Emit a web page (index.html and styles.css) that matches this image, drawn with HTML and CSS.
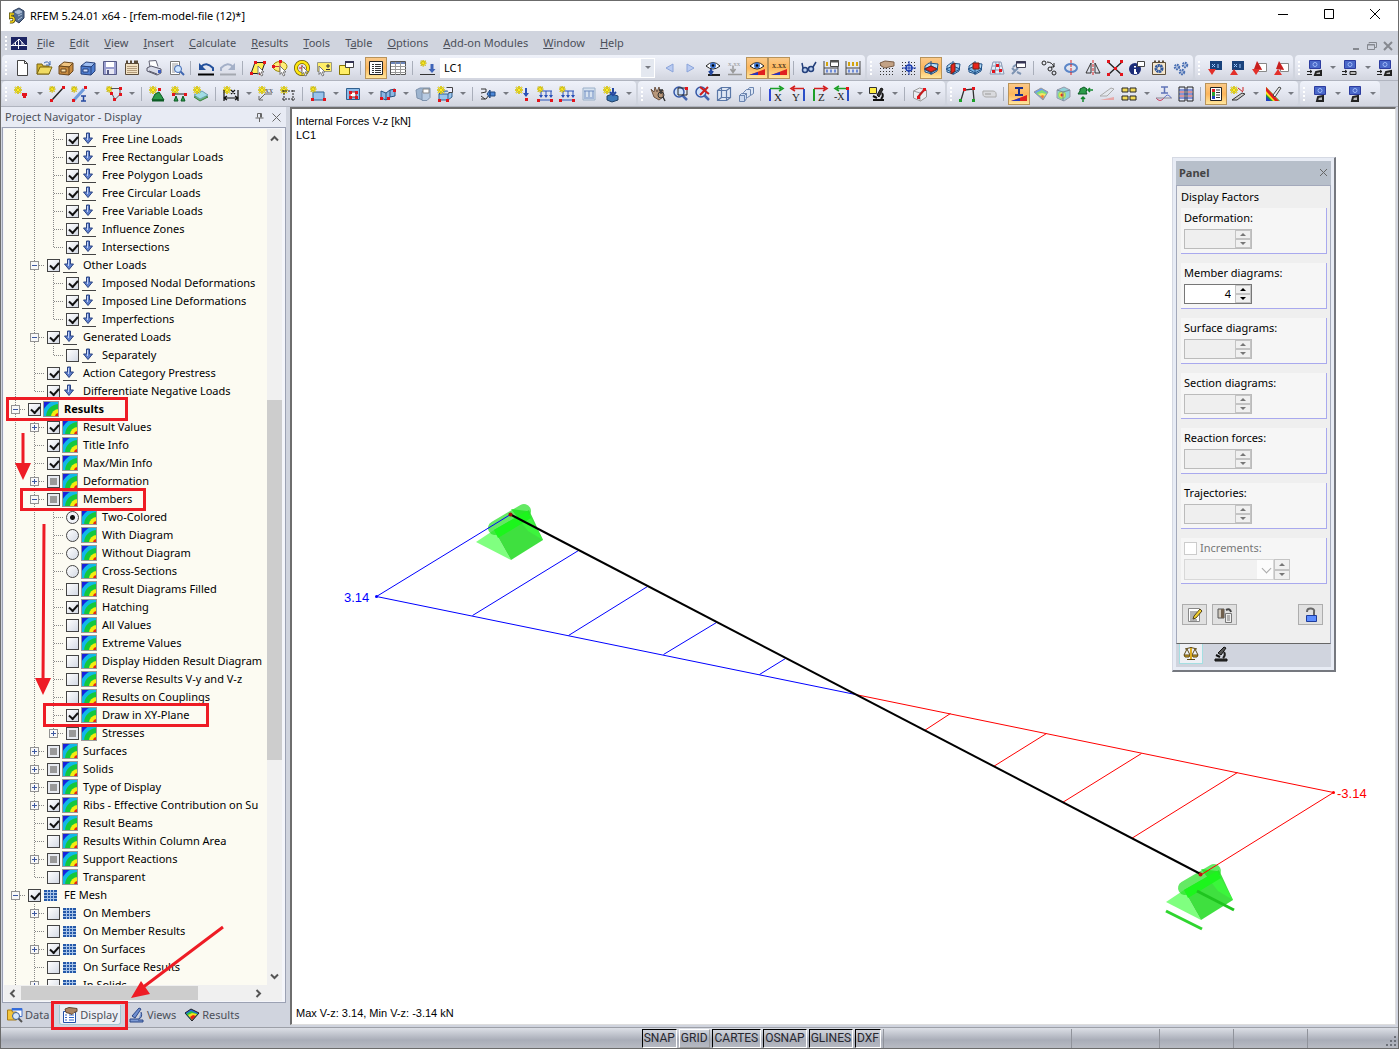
FILE: index.html
```html
<!DOCTYPE html>
<html lang="en">

<head>
    <meta charset="UTF-8">
    <meta name="viewport" content="width=device-width, initial-scale=1.0">
    <title>RFEM 5.24.01 x64 - [rfem-model-file (12)*]</title>
    <link rel="stylesheet" href="styles.css">
</head>

<body>
    <div class="window">
        <header class="titlebar">
            <svg class="app-icon" viewBox="0 0 18 18">
                <path d="M5 4l6-3 5 3v7l-5 5-6-4z" fill="#526b8e" stroke="#2d3d5c" />
                <path d="M7 5l4-2 3 2-4 2zM10 9l4-2M10 13l4-3" fill="#a9bcd6" stroke="#a9bcd6" />
                <path d="M6 7H2.500v3.500Q6 9.500 6 12.500T2 15" fill="none" stroke="#4f4b13" stroke-width="3" />
                <path d="M6 7H2.500v3.500Q6 9.500 6 12.500T2 15" fill="none" stroke="#f2d21b" stroke-width="1.600" />
            </svg>
            <h1>RFEM 5.24.01 x64 - [rfem-model-file (12)*]</h1>
            <div class="win-buttons">
                <button aria-label="Minimize"><svg viewBox="0 0 12 12"><path d="M1 6.500h10" /></svg></button>
                <button aria-label="Maximize"><svg viewBox="0 0 12 12"><path d="M1.500 1.500h9v9h-9z" /></svg></button>
                <button aria-label="Close"><svg viewBox="0 0 12 12"><path d="M1 1l10 10M11 1L1 11" /></svg></button>
            </div>
        </header>

        <nav class="menubar">
            <i class="grip"></i>
            <svg class="menu-logo" viewBox="0 0 16 13">
                <path d="M0 0h16v13H0z" fill="#1d2563" />
                <path d="M0 8.500h16M7.500 2v10M8 2L1 8.500M8 2l6 6.500M4.500 5v3M11 5v3" stroke="#fff" fill="none" />
            </svg>
            <a href="#"><u>F</u>ile</a>
            <a href="#"><u>E</u>dit</a>
            <a href="#"><u>V</u>iew</a>
            <a href="#"><u>I</u>nsert</a>
            <a href="#"><u>C</u>alculate</a>
            <a href="#"><u>R</u>esults</a>
            <a href="#"><u>T</u>ools</a>
            <a href="#">T<u>a</u>ble</a>
            <a href="#"><u>O</u>ptions</a>
            <a href="#"><u>A</u>dd-on Modules</a>
            <a href="#"><u>W</u>indow</a>
            <a href="#"><u>H</u>elp</a>
            <div class="mdi-buttons">
                <button aria-label="Minimize document"><svg viewBox="0 0 10 10"><path d="M2 8h6" stroke-width="2" /></svg></button>
                <button aria-label="Restore document"><svg viewBox="0 0 10 10"><path d="M.5 3.500h7v5h-7zM2 2.500V1.500h7.500v5H8M.5 4h7" /></svg></button>
                <button aria-label="Close document"><svg viewBox="0 0 10 10"><path d="M1 1l8 8M9 1L1 9" stroke-width="2" /></svg></button>
            </div>
        </nav>

        <div class="toolbar" id="toolbar1"></div>
        <div class="toolbar" id="toolbar2"></div>

        <main class="work">
            <aside class="navigator">
                <div class="nav-title">
                    <h2>Project Navigator - Display</h2>
                    <button aria-label="Pin"><svg viewBox="0 0 9 9"><path d="M2.500 .5h4v4M5.500 .5v4M2.500 .5v4M.5 5h8M4.500 5v4" /></svg></button>
                    <button aria-label="Close navigator"><svg viewBox="0 0 9 9"><path d="M.5 .5l8 8M8.500 .5l-8 8" /></svg></button>
                </div>
                <div class="nav-box">
                    <div class="tree-wrap">
                        <div class="tree" id="tree"></div>
                        <div class="vscroll">
                            <svg viewBox="0 0 9 9"><path d="M1 6.500L4.500 3 8 6.500" /></svg>
                            <div class="vtrack"><div class="vthumb"></div></div>
                            <svg viewBox="0 0 9 9"><path d="M1 2.500L4.500 6 8 2.500" /></svg>
                        </div>
                    </div>
                    <div class="hscroll">
                        <svg viewBox="0 0 9 9"><path d="M6.500 1L3 4.500 6.500 8" /></svg>
                        <div class="htrack"><div class="hthumb"></div></div>
                        <svg viewBox="0 0 9 9"><path d="M2.500 1L6 4.500 2.500 8" /></svg>
                    </div>
                </div>
                <div class="nav-tabs">
                    <button>
                        <svg viewBox="0 0 16 16"><path d="M5 1.500h10v8H5z" fill="#fff" stroke="#4470c8" /><path d="M5 2.500h10" stroke="#2e6ae0" stroke-width="2" /><path d="M.5 3h4l1 2h4v8h-9z" fill="#f4c63c" stroke="#a87c18" /><circle cx="9" cy="9" r="3.500" fill="#d7e8fa" stroke="#3b5c9a" /><path d="M11.500 11.500L15 15" stroke="#555" stroke-width="2" /></svg>Data
                    </button>
                    <button class="current">
                        <svg viewBox="0 0 16 16"><path d="M1.500 4.500h12v11h-12z" fill="#fff" stroke="#2351a8" /><path d="M3 8h2M7 8h5M3 10.500h2M7 10.500h5M3 13h2M7 13h5" stroke="#2f63c8" /><path d="M3 2l4-1.500 8 1v3l-3 1-2 2-2-1-4-1z" fill="#a98563" stroke="#5f4631" /></svg>Display
                    </button>
                    <button>
                        <svg viewBox="0 0 16 16"><path d="M10 1l2 1-6 9-3-2z" fill="#6e8fd0" stroke="#2a4687" /><path d="M12 5q2 5-2 7H1v3h13v-2H9" fill="#7d9ad4" stroke="#2a4687" /></svg>Views
                    </button>
                    <button>
                        <svg viewBox="0 0 16 16"><path d="M1 6l6-4 8 4-7 8z" fill="#1f62e8" /><path d="M2 7l5-3 7 3-6 6z" fill="#29c34a" /><path d="M4 8l4-2 5 1-5 6z" fill="#f4e11e" /><path d="M6 10l3-2 3 1-4 4z" fill="#e32219" /><path d="M1 6l6-4 8 4-7 8z" fill="none" stroke="#222" /></svg>Results
                    </button>
                </div>
            </aside>

            <section class="canvas">
                <svg class="drawing" viewBox="292 109 1103 915">
                    <!-- supports -->
                    <g id="support">
                        <path d="M494 530l-18 12 35 18z" fill="#80ff80" />
                        <path d="M494 530l35-20 14 30-32 20z" fill="#3fe03f" />
                        <path d="M527 511l16 29-15-9-17-22z" fill="#3cf53c" />
                        <path d="M495 528l29-17" stroke="#22e022" stroke-opacity=".7" stroke-width="14" stroke-linecap="round" />
                        <path d="M494 530l33-19 4 7-33 20z" fill="#1cf51c" />
                    </g>
                    <use href="#support" x="690" y="360" />
                    <path d="M1166 911l36 18" stroke="#2fd52f" stroke-width="3" />
                    <path d="M1197 891l37 19" stroke="#1fc41f" stroke-width="3" />
                    <!-- shear diagram -->
                    <g transform="translate(.5 .5)" fill="none">
                        <path d="M510 514L376 596L855 694M472 615L578 550M568 635L647 586M663 654L716 622M759 674L785 658" stroke="#0000ff" />
                        <path d="M855 694L1333 792L1201 874M950 713L924 730M1046 733L993 766M1141 753L1062 802M1237 772L1131 838" stroke="#ff0000" />
                        <path d="M510 514L1201 874" stroke="#000" stroke-width="2" />
                        <circle cx="376" cy="596" r="1.500" fill="#0000ff" />
                        <circle cx="1333" cy="792" r="1.500" fill="#ff0000" />
                        <circle cx="510" cy="514" r="2" fill="#a01010" />
                        <circle cx="1200" cy="874" r="2" fill="#c01010" />
                    </g>
                    <text x="344" y="602" fill="#0000ff">3.14</text>
                    <text x="1337" y="798" fill="#ff0000">-3.14</text>
                </svg>
                <p class="info">Internal Forces V-z [kN]<br>LC1</p>
                <p class="minmax">Max V-z: 3.14, Min V-z: -3.14 kN</p>

                <div class="panel">
                    <div class="panel-title">
                        <h2>Panel</h2>
                        <button aria-label="Close panel"><svg viewBox="0 0 9 9"><path d="M1 1l7 7M8 1L1 8" /></svg></button>
                    </div>
                    <div class="panel-body">
                        <h3>Display Factors</h3>
                        <div id="factors"></div>
                        <div class="factor off">
                            <label class="inc"><input type="checkbox" disabled>Increments:</label>
                            <div class="inc-row">
                                <select aria-label="Increment" disabled></select>
                                <span class="spin"><button aria-label="Up" disabled></button><button aria-label="Down" disabled></button></span>
                            </div>
                        </div>
                        <div class="panel-buttons">
                            <button aria-label="Edit"><svg viewBox="0 0 16 16"><path d="M1.500 1.500h11v13h-11z" fill="#fff" stroke="#888" /><path d="M3 5h7M3 7h6M3 9h4M3 11h4M3 13h7" stroke="#666" /><path d="M6 12l1-3 6-7 2 2-6 7z" fill="#f3d02c" stroke="#53431a" /></svg></button>
                            <button aria-label="Copy settings"><svg viewBox="0 0 16 16"><path d="M1 2h6v9H1z" fill="#cfc8bd" stroke="#555" /><path d="M4 2h3v9H4z" fill="#70604e" /><path d="M9 3q4-2 5 2" fill="none" stroke="#444" stroke-width="2" /><path d="M8.500 6.500h6v9h-6z" fill="#eee" stroke="#777" /><path d="M10 9h3M10 11h3M10 13h3" stroke="#777" /></svg></button>
                            <button class="lock" aria-label="Lock"><svg viewBox="0 0 16 16"><path d="M4 5q0-4 4-3.500T11 5v3" fill="none" stroke="#666" stroke-width="2" /><path d="M3.500 8.500h10v6h-10z" fill="#5d8dff" stroke="#1e3c9c" /></svg></button>
                        </div>
                    </div>
                    <div class="panel-tabs">
                        <button class="current" aria-label="Factors"><svg viewBox="0 0 16 16"><path d="M8 1v12M2 3q6-3 12 0M4 13.500h8M1 9l3-6 3 6M9 9l3-6 3 6" fill="none" stroke="#5c4713" /><path d="M1 9h6l-1 2H2zM9 9h6l-1 2h-4z" fill="#dcae25" stroke="#5c4713" /><path d="M7 2h2v11H7z" fill="#dcae25" /></svg></button>
                        <button aria-label="Filter"><svg viewBox="0 0 16 16"><path d="M11 1l2 1-5 7-3-2z" fill="#555" stroke="#111" /><path d="M11 6q2 3-1 6" fill="none" stroke="#222" stroke-width="2" /><path d="M2 13h12v2H2z" fill="#333" stroke="#111" /><path d="M3 9l4 2" stroke="#111" stroke-width="2" /></svg></button>
                    </div>
                </div>
            </section>
        </main>

        <footer class="statusbar">
            <button class="on">SNAP</button>
            <button>GRID</button>
            <button class="on wide">CARTES</button>
            <button class="on">OSNAP</button>
            <button class="on">GLINES</button>
            <button class="on">DXF</button>
            <span class="cell message"></span>
            <span class="cell coords"></span>
            <span class="cell"></span>
            <span class="cell"></span>
            <span class="cell last">
                <svg viewBox="0 0 12 12"><path d="M8 0h2v2H8zM4 4h2v2H4zM8 4h2v2H8zM0 8h2v2H0zM4 8h2v2H4zM8 8h2v2H8z" fill="#6d7179" /></svg>
            </span>
        </footer>

        <!-- instruction marks over the navigator -->
        <svg class="marks" viewBox="0 0 290 1049">
            <path d="M7.500 398.500h119v21h-119zM21.500 489.500h123v20h-123zM44.500 704.500h163v21h-163zM52.500 1002.500h74v26h-74z" />
            <path d="M23 433v34M44 524L43 682M223 927L142 988" />
            <path class="head" d="M15 463h16l-8 17zM35 678h16l-8 17zM131 998l10-17 9 13z" />
        </svg>
    </div>

    <script src="script.js"></script>
</body>

</html>
```
FILE: styles.css
```css
html,
body,
h1,
h2,
h3,
p {
    margin: 0;
    padding: 0;
}

* {
    box-sizing: border-box;
}

body {
    font: 11px/18px "Noto Sans", "Open Sans", sans-serif;
    color: #000;
}

h1,
h2,
h3 {
    font-size: 11px;
    font-weight: normal;
}

button {
    font: inherit;
    color: inherit;
    background: none;
    border: 0;
    padding: 0;
}

svg {
    flex: none;
}

.window {
    position: relative;
    display: flex;
    flex-direction: column;
    height: 100vh;
    overflow: hidden;
    border: 1px solid #6b6b6b;
    background: #d0d4de;
}

/* title */
.titlebar {
    display: flex;
    align-items: center;
    height: 30px;
    flex: none;
    padding-left: 7px;
    background: #fff;
}

.app-icon {
    width: 18px;
    height: 18px;
    margin-right: 4px;
}

.win-buttons {
    display: flex;
    margin-left: auto;
}

.win-buttons button {
    width: 46px;
    height: 28px;
}

.win-buttons svg {
    width: 12px;
    height: 12px;
    fill: none;
    stroke: #000;
}

/* menu */
.menubar {
    display: flex;
    align-items: center;
    height: 24px;
    flex: none;
    padding-left: 4px;
    background: #d0d4de;
}

.menubar a {
    color: #4b4f59;
    text-decoration: none;
    margin-right: 15px;
}

.menu-logo {
    width: 16px;
    height: 13px;
    margin: 0 10px 0 2px;
}

.grip {
    width: 4px;
    height: 14px;
    flex: none;
    background: repeating-linear-gradient(#fff 0 2px, transparent 2px 4px) 0 0 / 2px 100% no-repeat;
}

.mdi-buttons {
    display: flex;
    align-self: flex-end;
    margin-left: auto;
    gap: 6px;
    padding: 0 5px 4px 0;
}

.mdi-buttons button {
    height: 10px;
    display: flex;
}

.mdi-buttons svg {
    width: 10px;
    height: 10px;
    fill: none;
    stroke: #85888f;
}

/* toolbars */
.toolbar {
    display: flex;
    height: 26px;
    flex: none;
    overflow: hidden;
    border-bottom: 1px solid #b0b4bf;
    padding-left: 1px;
}

.group {
    display: flex;
    align-items: center;
    flex: none;
    padding: 0 1px 0 3px;
    border-radius: 4px;
    background: linear-gradient(#eff2fa, #e3e6f0 50%, #d2d5df);
}

.group .grip {
    width: 5px;
    margin-right: 1px;
}

.group + .group {
    margin-left: 2px;
}

.tool {
    display: flex;
    align-items: center;
    justify-content: center;
    width: 22px;
    height: 22px;
    flex: none;
}

.tool svg {
    width: 16px;
    height: 16px;
    overflow: visible;
}

.tool.active {
    border: 1px solid #b8935a;
    background: linear-gradient(#fbc988, #fdb65b 50%, #ffe69b);
}

.sep {
    width: 1px;
    height: 14px;
    margin: 0 4px 0 3px;
    background: #a9aeba;
}

.drop {
    width: 13px;
    height: 22px;
    flex: none;
    display: flex;
    align-items: center;
    justify-content: center;
}

.drop::before {
    content: "";
    border: 3px solid transparent;
    border-top-color: #777a82;
    border-bottom: 0;
}

.combo {
    display: flex;
    align-items: center;
    width: 215px;
    height: 20px;
    margin: 0 3px 0 1px;
    border: 1px solid #fff;
    background: linear-gradient(#e4e8f0, #e4e8f0) right / 13px 100% no-repeat #fff;
}

.combo select {
    flex: 1;
    padding: 0 3px;
    border: 0;
    font: inherit;
    color: #000;
    appearance: none;
    background: none;
}

.combo::after {
    content: "";
    margin-right: 3px;
    border: 3px solid transparent;
    border-top-color: #777a82;
    border-bottom: 0;
}

/* work area */
.work {
    display: flex;
    flex: 1;
    min-height: 0;
}

.navigator {
    display: flex;
    flex-direction: column;
    width: 289px;
    flex: none;
    padding: 0 4px 0 0;
}

.nav-title {
    display: flex;
    align-items: center;
    height: 20px;
    flex: none;
    gap: 8px;
    padding: 0 5px 0 4px;
    background: #e8ebf4;
    color: #4b4f59;
}

.nav-title h2 {
    flex: 1;
}

.nav-title button {
    display: flex;
}

.nav-title svg,
.panel-title svg {
    width: 9px;
    height: 9px;
    fill: none;
    stroke: #666;
}

.nav-box {
    display: flex;
    flex-direction: column;
    flex: 1;
    min-height: 0;
    margin-left: 1px;
    padding: 1px 3px 1px 1px;
    border: 1px solid #9ba1b3;
    background: #f4f5fa;
}

.tree-wrap {
    display: flex;
    flex: 1;
    min-height: 0;
}

.tree {
    flex: 1;
    min-width: 0;
    overflow: hidden;
    padding: 1px 0 0 2px;
    background: #fcfbf2;
}

.row {
    display: flex;
    align-items: center;
    height: 18px;
    overflow: hidden;
    white-space: nowrap;
}

.row input {
    width: 13px;
    height: 13px;
    flex: none;
    margin: 0 2px 0 3px;
    appearance: none;
    border: 1px solid #444;
    background: linear-gradient(135deg, #fff, #d4dae5);
}

.row input[type=radio] {
    border-radius: 50%;
}

.row input[type=radio]:checked {
    background: radial-gradient(circle, #111 2px, transparent 3px), #f1f3f8;
}

.row input[type=checkbox]:checked::before {
    content: "";
    display: block;
    width: 7px;
    height: 4px;
    margin: 2px 0 0 2px;
    border: solid #111;
    border-width: 0 0 2px 2px;
    transform: rotate(-48deg);
}

.row input.mixed {
    background: linear-gradient(#999, #999) center / 7px 7px no-repeat, #e8ebf1;
}

.row svg {
    width: 16px;
    height: 16px;
    margin-right: 5px;
}

.row.strong {
    font-weight: bold;
}

.guide {
    width: 19px;
    height: 18px;
    flex: none;
    background-repeat: no-repeat;
    background-position: 9px 0, 10px 9px;
    background-size: 1px 0, 0 1px;
    background-image: repeating-linear-gradient(#888 0 1px, transparent 1px 2px), repeating-linear-gradient(90deg, #888 0 1px, transparent 1px 2px);
}

.guide.line {
    background-size: 1px 18px, 0 1px;
}

.guide.tee {
    background-size: 1px 18px, 11px 1px;
}

.guide.last {
    background-size: 1px 10px, 11px 1px;
}

.expander {
    display: block;
    width: 9px;
    height: 9px;
    margin: 5px 0 0 5px;
    border: 1px solid #929292;
    background: linear-gradient(#3c58a0, #3c58a0) center / 5px 1px no-repeat, #f8f8f8;
}

.expander.plus {
    background: linear-gradient(#3c58a0, #3c58a0) center / 5px 1px no-repeat, linear-gradient(#3c58a0, #3c58a0) center / 1px 5px no-repeat, #f8f8f8;
}

.vscroll {
    display: flex;
    flex-direction: column;
    align-items: center;
    width: 15px;
    padding: 5px 0 4px;
    background: #f0f0f0;
}

.vscroll svg,
.hscroll svg {
    width: 9px;
    height: 9px;
    fill: none;
    stroke: #555;
    stroke-width: 2;
}

.vtrack {
    flex: 1;
    width: 100%;
    padding-top: 257px;
}

.vthumb {
    height: 63%;
    background: #cdcdcd;
}

.hscroll {
    display: flex;
    align-items: center;
    height: 16px;
    padding: 0 19px 0 4px;
    background: #f0f0f0;
}

.htrack {
    flex: 1;
    height: 100%;
    padding: 1px 0 0 4px;
}

.hthumb {
    width: 76%;
    height: 14px;
    background: #cdcdcd;
}

.nav-tabs {
    display: flex;
    height: 24px;
    flex: none;
    align-items: center;
    gap: 4px;
    padding-left: 4px;
    color: #4b4f59;
}

.nav-tabs button {
    display: flex;
    align-items: center;
    gap: 2px;
    height: 20px;
    padding: 0 2px;
}

.nav-tabs svg {
    width: 16px;
    height: 16px;
}

.nav-tabs .current {
    margin: 0 2px 0 4px;
    background: #eef0f5;
    border: 1px solid #a4c7d2;
    border-top: 0;
    border-radius: 0 0 3px 3px;
}

/* drawing area */
.canvas {
    position: relative;
    flex: 1;
    min-width: 0;
    margin: 0 2px 2px 0;
    border: 1px solid #ddd;
    border-top: 2px solid #6e6e6e;
    border-left: 2px solid #6e6e6e;
    background: #fff;
    font: 11px/14px "Liberation Sans", Arial, sans-serif;
}

.drawing {
    display: block;
    width: 100%;
    height: 100%;
}

.drawing text {
    font-size: 13px;
}

.info {
    position: absolute;
    left: 4px;
    top: 5px;
}

.minmax {
    position: absolute;
    left: 4px;
    bottom: 4px;
}

/* control panel */
.panel {
    position: absolute;
    top: 48px;
    right: 59px;
    width: 164px;
    padding: 3px;
    border: 1px solid #d5d9e3;
    border-right: 2px solid #75787f;
    border-bottom: 2px solid #75787f;
    background: #e8ecf5;
    font: 11px/14px "Noto Sans", "Open Sans", sans-serif;
}

.panel-title {
    display: flex;
    align-items: center;
    justify-content: space-between;
    height: 24px;
    padding: 0 3px;
    background: #b7bfca;
}

.panel-title h2 {
    font-weight: bold;
    color: #444;
}

.panel-body {
    border: 1px solid #a3a9bb;
    border-bottom-color: #666;
    padding: 4px 3px 18px 4px;
    background: #efefef;
}

.panel-body h3 {
    line-height: 14px;
    padding-bottom: 4px;
}

.factor {
    display: flex;
    flex-direction: column;
    align-items: flex-start;
    height: 46px;
    margin-bottom: 9px;
    padding: 3px 0 0 3px;
    gap: 4px;
    border-right: 1px solid #a9a9ee;
    border-bottom: 1px solid #a9a9ee;
    background: #f6f6f6;
}

.number {
    display: flex;
    width: 68px;
    height: 20px;
    border: 1px solid #777;
}

.number input {
    flex: 1;
    width: 0;
    min-width: 0;
    border: 0;
    padding: 0 4px;
    font: inherit;
    text-align: right;
    background: #fff;
}

.off .number {
    border-color: #bbb;
}

.off .number input {
    background: #efefef;
}

.spin {
    display: flex;
    flex-direction: column;
    width: 16px;
}

.spin button {
    display: flex;
    flex: 1;
    align-items: center;
    justify-content: center;
    border: 1px solid #c4c4c4;
    background: #f0f0f0;
    color: #000;
}

.off .spin button {
    color: #777;
}

.spin button::before {
    content: "";
    border: 3px solid transparent;
    border-bottom-color: currentColor;
    border-top: 0;
}

.spin button:last-child::before {
    border: 3px solid transparent;
    border-top-color: currentColor;
    border-bottom: 0;
}

.inc {
    display: flex;
    align-items: center;
    gap: 3px;
    color: #777;
}

.inc input {
    width: 13px;
    height: 13px;
    margin: 0;
    appearance: none;
    border: 1px solid #ccc;
    background: #fff;
}

.inc-row {
    position: relative;
    display: flex;
    height: 21px;
}

.inc-row select {
    width: 90px;
    border: 1px solid #ccc;
    appearance: none;
    background: linear-gradient(#fff, #fff) right / 16px 100% no-repeat, #efefef;
}

.inc-row::after {
    content: "";
    position: absolute;
    left: 79px;
    top: 6px;
    width: 6px;
    height: 6px;
    border: solid #aaa;
    border-width: 0 1px 1px 0;
    transform: rotate(45deg);
}

.panel-buttons {
    display: flex;
    gap: 5px;
    padding: 11px 4px 0 1px;
}

.panel-buttons button {
    display: flex;
    align-items: center;
    justify-content: center;
    width: 25px;
    height: 21px;
    border: 1px solid #adadad;
    background: #e1e1e1;
}

.panel-buttons .lock {
    margin-left: auto;
}

.panel-buttons svg,
.panel-tabs svg {
    width: 16px;
    height: 16px;
}

.panel-tabs {
    display: flex;
    gap: 6px;
    height: 23px;
    padding: 0 3px 3px;
    background: #d0d4de;
}

.panel-tabs button {
    display: flex;
    align-items: center;
    justify-content: center;
    width: 24px;
}

.panel-tabs .current {
    background: #eef0f5;
    border: 1px solid #a4dfe2;
    border-top: 0;
}

/* status */
.statusbar {
    display: flex;
    justify-content: flex-end;
    height: 21px;
    flex: none;
    gap: 2px;
    padding-top: 1px;
    border-top: 1px solid #9da0a8;
    background: linear-gradient(#dcdfe6, #a9adb8 60%, #b8bbc3);
    font: 12px/17px Roboto, "Liberation Sans", sans-serif;
    color: #27272f;
}

.statusbar button {
    height: 19px;
    padding: 0 1px;
    border: 1px solid;
    border-color: #fff #999 #999 #fff;
}

.statusbar .on {
    border-color: #000 #fff #fff #000;
}

.statusbar .wide {
    padding: 0 2px;
}

.cell {
    width: 72px;
    border-left: 1px solid #90939b;
}

.cell.message {
    width: 186px;
}

.cell.coords {
    width: 86px;
}

.cell.last {
    display: flex;
    align-items: flex-end;
    justify-content: flex-end;
    width: 91px;
}

.cell svg {
    width: 12px;
    height: 12px;
}

.marks {
    position: absolute;
    left: -1px;
    top: -1px;
    width: 290px;
    height: 1049px;
    fill: none;
    stroke: #ee1c25;
    stroke-width: 3;
    pointer-events: none;
}

.marks .head {
    fill: #ee1c25;
    stroke: none;
}
```
FILE: script.js
```js
// small pieces shared by the toolbar icons
function p(d, stroke, fill, w) {
    return '<path d="' + d + '" stroke="' + (stroke || "none") + '" fill="' + (fill || "none") + '" stroke-width="' + (w || 1) + '"/>'
}
function dot(x, y, c) {
    return '<rect x="' + x + '" y="' + y + '" width="3" height="3" fill="' + (c || "#e3141c") + '"/>'
}
function txt(x, y, s, size, c) {
    return '<text x="' + x + '" y="' + y + '" font-family="Liberation Serif, serif" font-size="' + size + '" fill="' + (c || "#222") + '">' + s + '</text>'
}
var star = p("M4 0v8M0 4h8M1 1l6 6M7 1L1 7", "#a8980c", "", 1.6) + p("M4 0v8M0 4h8M1 1l6 6M7 1L1 7", "#ffee22")
var cursor = p("M8 6l6 6-3 0 2 3-1.500 1-2-3.500-1.500 2z", "#777", "#fff")
var eye = p("M1 6q7-7 14 0q-7 6-14 0z", "#222", "#fff") + '<circle cx="8" cy="5.500" r="3" fill="#3f75d0"/><circle cx="8" cy="5.500" r="1.200" fill="#000"/>'
var wedge = p("M0 15h16V9z", "", "#e02020") + p("M0 15l9-3v3z", "", "#2438c0")
var monitor = p("M2.500 .5h11v8h-11z", "#2c3ca0", "#4a68c8") + '<circle cx="8" cy="4.500" r="2" fill="none" stroke="#9db8f8"/>'
var grid = p("M1 5.500h15M1 8.500h15M1 11.500h15M1 14.500h15", "#333").replace("/>", ' stroke-dasharray="1 2"/>')
var globe = '<circle cx="7" cy="6" r="5" fill="#cfe2fa" stroke="#3557a6" stroke-width="1.500"/>' + p("M10.500 9.500L15 14", "#4566b0", "", 2.5)
var book = p("M1 4l4-2h10l-3 3H8v9l-6-2z", "#7d92ad", "#9db4cf") + p("M7 5.500h5l3-3v9l-3 3H7z", "#7d92ad", "#b8cbe2") + p("M8 3h6v4H8z", "#888", "#fff")
var loads = p("M2 14h13M3 5h12M4 5v6M9 5v6M14 5v6", "#2a52b8") + p("M2 9h4l-2 3zM7 9h4l-2 3zM12 9h4l-2 3z", "", "#2a52b8")
var beads = p("M1 1v14M15 1v14M1 14h14M1 8h14", "#444") + p("M3 4h2M7 4h2M11 4h2", "#d4a40c", "", 4) + p("M3 11h2M7 11h2M11 11h2", "#6f8cd8", "", 3)
var planes = p("M2 6l4-3 9 1-1 7-5 3-7-2z", "#1d4f86", "#b5dcf6") + p("M8 1v14M1 9l7-3 7 3-7 4z", "#1d4f86", "#7ab4e4")

var icons = {
    newfile: p("M3.500 .5h7l3 3v12h-10z", "#444", "#fff") + p("M10.500 .5v3h3", "#444"),
    open: p("M1 4h5l1 2h6v8H1z", "#7a6512", "#d3b42f") + p("M1 14l3-7h12l-3 7z", "#7a6512", "#f0db63") + p("M8 3q4-3 6 2M14 1v4h-4", "#3c68b0"),
    boxtan: p("M1 6l5-4 9 1-4 4z", "#6b471c", "#f0c480") + p("M1 6l10 1v8L1 14zM11 7l4-4v8l-4 4", "#6b471c", "#c98c40") + p("M3 9h5v3H3z", "#6b471c", "#fbe0a8"),
    boxblue: p("M1 6l5-4 9 1-4 4z", "#26417c", "#9cbcf0") + p("M1 6l10 1v8L1 14zM11 7l4-4v8l-4 4", "#26417c", "#4f7ed0") + p("M3 9h5v3H3z", "#26417c", "#cfe0ff"),
    save: p("M1.500 1.500h13v13h-13z", "#565b86", "#9a9fd0") + p("M4 2h8v5H4z", "", "#fff") + p("M4 9h8v5H4z", "", "#e8e8f4") + p("M6 10v4", "#565b86", "", 2),
    notes: p("M1.500 3.500h13v11h-13z", "#5a4b39", "#f2e2c4") + p("M3 6.500h10M3 8.500h10M3 10.500h10M3 12.500h10", "#b49c7c") + p("M2 2h2M6 2h2M10 2h4", "#5a4b39", "", 3),
    print: p("M4 7L3 1l7-.5 2 6", "#667", "#fff") + p("M1 8l4-2 10 3v4l-4 2-10-4z", "#556", "#d8dbe8") + p("M3 11l8 3", "#556") + dot(12, 10, "#3c5cc0"),
    preview: p("M2.500 1.500h9v13h-9z", "#777", "#fff") + p("M4 4h6M4 6h5M4 8h3M4 10h3M4 12h3", "#999") + '<circle cx="10" cy="9" r="3.500" fill="#cfe6ff" stroke="#3f66b0"/>' + p("M12.500 11.500L16 15", "#3f66b0", "", 2),
    undo: p("M3 7q5-6 12 1v3", "#23509c", "", 2) + p("M1 3v7h7z", "", "#23509c") + p("M0 14.500h16", "#000", "", 2),
    redo: p("M13 7q-5-6-12 1v3", "#a4b0c8", "", 2) + p("M15 3v7H8z", "", "#a4b0c8") + p("M0 14.500h16", "#a4a8b0", "", 2),
    selpoly: p("M5 2.500h10l-4 11H1z", "#222", "#ffee55") + dot(4, 1) + dot(13, 1) + dot(0, 12) + dot(9, 12) + cursor,
    selellipse: '<ellipse cx="8" cy="6.500" rx="7" ry="5" fill="#ffee77" stroke="#998800"/>' + p("M8 1v10M2 6.500h5", "#c33") + dot(7, 0) + dot(0, 5) + cursor,
    selring: '<circle cx="8" cy="8" r="6" fill="none" stroke="#665500" stroke-width="4"/><circle cx="8" cy="8" r="6" fill="none" stroke="#ffe812" stroke-width="2.500"/>' + p("M8 5v6M5 8h6", "#e3141c") + cursor,
    selplus: p("M1.500 2.500h14v9h-14z", "#998", "#ffee66") + p("M10 6h4M12 4v4M10 9.500h4", "#333") + '<g transform="translate(-5)">' + cursor + '</g>',
    selwin: p("M1.500 5.500h10v9h-10z", "#887700", "#ffee66") + p("M7.500 1.500h8v6h-8z", "#444", "#fff") + p("M7 2h9", "#335", "", 2),
    list: p("M1.500 1.500h13v13h-13z", "#222", "#fff") + p("M4 4.500h2M7 4.500h6M4 6.500h2M7 6.500h6M4 8.500h2M7 8.500h6M4 10.500h2M7 10.500h6M4 12.500h2M7 12.500h6", "#333"),
    table: p("M.5 1.500h15v13H.5z", "#555", "#fff") + p("M1 3h14", "#6c85b8", "", 2) + p("M1 6.500h15M1 9.500h15M1 12.500h15M5.500 2v13M10.500 2v13", "#999"),
    lcnew: '<g transform="scale(.8)">' + star + '</g>' + p("M0 14.500h15", "#333") + p("M12 4v6", "#3e63b8", "", 3) + p("M8.500 9h7L12 13z", "", "#3e63b8"),
    prev: p("M12 4v8L5 8z", "#8ba4da", "#b9cbf2"),
    next: p("M4 4v8l7-4z", "#8ba4da", "#b9cbf2"),
    eyeload: eye + p("M3 15h12", "#222", "", 2) + p("M6 9v4M4 11l2 3 2-3", "#2448a0", "", 2),
    xxx: txt(1, 6, "x.xx", 7, "#999") + p("M1 14.500h14M6 6v6M3.500 9L6 12.500 8.500 9", "#999", "", 1.5),
    eyewedge: wedge + eye,
    xxwedge: wedge + txt(1, 8, "x.xx", 8, "#111"),
    glasses: '<circle cx="4" cy="10" r="2.500" fill="#bcd0f0" stroke="#24407c" stroke-width="1.500"/><circle cx="10" cy="9" r="2.500" fill="#bcd0f0" stroke="#24407c" stroke-width="1.500"/>' + p("M2 8L1 3M12 7l3-5", "#24407c", "", 1.5),
    beads: beads,
    beadswin: beads + p("M7.500 .5h8v6h-8z", "#444", "#fff") + p("M7 1.500h9", "#555", "", 2),
    handgrid: grid + p("M1 3l5-2 9 1v4l-5 1-4 1-4-2z", "#7b5f48", "#c3a285"),
    gridset: p("M1 2.500h15", "#333").replace("/>", ' stroke-dasharray="1 2"/>') + grid + '<circle cx="8" cy="8" r="3" fill="#dfe8fa" stroke="#1c3db0" stroke-width="1.500"/>' + p("M8 1v14M1 8h14", "#1c3db0"),
    plane1: planes + p("M2 9l6-3 6 3-6 3z", "#721", "#e8231c"),
    plane2: planes + p("M6 5l4-2v8l-4 3z", "#721", "#e8231c"),
    plane3: planes + p("M6 3h6v6H6z", "#721", "#e8231c"),
    mesh: p("M4 2h8l3 12H1zM3 6h10M2 10h12M7 2L6 14M10 2l1 12", "#8a9ab4", "#e6edf8") + dot(7, 4) + dot(3, 10) + dot(10, 9),
    wrench: p("M1 14l6-6M1 8l3 3M6 12l4 2M6 4L2 7", "#7d93b2", "", 2) + p("M5.500 1.500h9v6h-9z", "#445", "#fff") + p("M5 2.500h10", "#335", "", 2),
    move: '<circle cx="3" cy="3" r="2" fill="none" stroke="#222"/><circle cx="9" cy="9" r="2" fill="none" stroke="#222"/><circle cx="13" cy="13" r="2" fill="none" stroke="#222"/>' + p("M6 2q5 0 7 5M13 3v4h-3", "#222"),
    rotate: '<ellipse cx="8" cy="8" rx="6" ry="4" fill="none" stroke="#5b86c8" stroke-width="2"/>' + p("M8 0v16", "#d22").replace("/>", ' stroke-dasharray="3 1"/>'),
    mirror: p("M6 3v10H1zM10 3v10h5z", "#333") + p("M8 0v16", "#d22").replace("/>", ' stroke-dasharray="3 1"/>'),
    cross: p("M1 2l14 13M15 2L1 15", "#222", "", 1.4) + dot(0, 0) + dot(13, 0) + dot(0, 13) + dot(13, 13) + dot(7, 7),
    info: '<circle cx="6" cy="9" r="6" fill="#1b2c78"/>' + p("M6 6v1.500M6 9v4M5 13h3", "#fff", "", 2) + p("M8.500 1.500h7v5h-7z", "#444", "#fff"),
    gearbook: p("M1.500 2.500h13v12h-13z", "#5d4f3a", "#f4e6cd") + p("M3 1.500h2M7 1.500h2M11 1.500h2", "#5d4f3a", "", 2) + '<circle cx="8" cy="8.500" r="3" fill="none" stroke="#2e579e" stroke-width="3" stroke-dasharray="2 .5"/>',
    gears: '<g fill="none" stroke="#4a70b4" stroke-width="2.500" stroke-dasharray="1.500 .6"><circle cx="4" cy="7" r="2"/><circle cx="12" cy="5" r="2"/><circle cx="9" cy="12" r="2"/></g>',
    dxf1: p("M3 1h12v9H3z", "", "#18427c") + p("M5 4l3 3M8 4L5 7M11 4v4", "#9cc8ff") + p("M1 9h8l-4 6z", "", "#e3302a"),
    dxf2: p("M3 1h12v9H3z", "", "#18427c") + p("M5 4l3 3M8 4L5 7M11 4v4", "#9cc8ff") + p("M1 15h8L5 9z", "", "#e3302a"),
    pdf1: p("M7.500 3.500h8v8h-8z", "#888", "#fff") + p("M6 1q5 8 5 9L3 9z", "", "#c81e1e") + p("M1 9h8l-4 6z", "", "#e3302a"),
    pdf2: p("M7.500 3.500h8v8h-8z", "#888", "#fff") + p("M6 1q5 8 5 9L3 9z", "", "#c81e1e") + p("M1 15h8L5 9z", "", "#e3302a"),
    mon1: monitor + p("M0 11.500h5M0 14.500h5M3 10l2 1.500L3 13", "#222") + p("M9 12l5-1v4H8z", "#222", "#bbb", 2),
    mon2: monitor + p("M0 11.500h5M0 14.500h5M3 10l2 1.500L3 13", "#222") + p("M8 11.500h6v3H8z", "#222", "#bbb"),
    mon3: monitor + p("M6 11l5-1v5H5z", "#222", "#bbb", 2),
    node: star + dot(8, 7) + dot(10, 7) + dot(9, 9),
    line: '<g transform="scale(.8)">' + star + '</g>' + p("M3 14L14 2", "#222", "", 1.4) + dot(1, 13) + dot(13, 0),
    member: '<g transform="scale(.8)">' + star + '</g>' + p("M3 14L13 3", "#6f9bdc", "", 3) + dot(1, 13) + dot(13, 0) + p("M10 10h5M10 15h5M12.500 10v5", "#2448a0", "", 1.5),
    poly: '<g transform="scale(.8)">' + star + '</g>' + p("M5 2.500h9v6l-5 5L6 8", "#555") + dot(4, 6) + dot(13, 1) + dot(13, 7) + dot(7, 12),
    nsupport: p("M6 8l4-2 2 3 3 5H3z", "#0c5a24", "#2c9c4a") + star + dot(9, 2) + p("M3 14.500h12", "#0c5a24", "", 2),
    lsupport: star + p("M2 8h13", "#222") + dot(1, 7) + dot(13, 7) + p("M5 10l2 5H3zM12 10l2 5h-4z", "#0c5a24", "#2c9c4a"),
    ssupport: p("M1 11l6 4 8-4-8-2z", "#3a8040", "#6ab870") + p("M1 9l8-4 6 4-8 4z", "#6c9fb0", "#a0dce4") + star,
    dim: star + p("M1 4v11M15 4v11M1 12h14M4 10l-3 2 3 2M12 10l3 2-3 2M8 4l4 4M12 4L8 8", "#111", "", 1.2),
    comment: star + txt(7, 7, "xx", 8, "#444") + p("M14 8H7l-6 6M1 10v4h4", "#666"),
    frame: star + p("M4 4v12M13 4v12M2 5h13M2 13h13", "#222").replace("/>", ' stroke-dasharray="2 1"/>'),
    rect: p("M3 6h11v8H3z", "#31608f", "#9ac4ec") + '<g transform="scale(.8)">' + star + '</g>' + dot(1, 12) + dot(13, 12),
    opening: p("M1.500 2.500h13v11h-13z", "#31608f", "#8cbcea") + p("M5 6h6v5H5z", "#822", "#fff") + dot(4, 5) + dot(10, 5) + dot(4, 10) + dot(10, 10),
    surf: p("M1 5l5 2 4-3 5-1v7l-5 1-4 3-5-2zM6 7v7M10 4v7", "#28527e", "#8cb8e4") + dot(0, 11) + dot(7, 11) + dot(13, 3),
    solid: book,
    solidnew: p("M2 8h9v6H2zM11 8l4-3v6l-4 3M2 8l3-3h9", "#31608f", "#9ac4ec") + p("M9.500 1.500h6v5h-4", "#444", "#eef") + star + dot(1, 13) + dot(9, 13),
    release: p("M1 3h5v3l-5 1M1 13h5l3-4M1 10l4 3", "#333") + p("M10 4l-3 4 3 4zM10 6h5v4h-5z", "#204880", "#4c88d8"),
    nload: star + p("M11 2v8", "#2a52b8", "", 2) + p("M8 7h6l-3 4z", "", "#2a52b8") + dot(10, 12),
    mload: loads + '<g transform="scale(.8)">' + star + '</g>' + dot(0, 13) + dot(13, 13),
    sload: p("M2 2h12v12H2z", "#9ab0c8", "#d6e2f0") + p("M3 5h10M4 5v6M8 5v6M12 5v6M3 12h10", "#6f8cc0"),
    soload: p("M4 10l5-2 6 2v4l-6 2-5-2z", "#1e4068", "#3c78b8") + star + p("M10 2v5M7 6l3 3 3-3", "#2448a0", "", 2),
    hand: p("M1 3l3 3 1-5 2 5 2-5 1 5 3-2v7l-4 3-5-3z", "#6c5343", "#b8977a") + '<circle cx="11" cy="9" r="3" fill="none" stroke="#333"/>' + p("M13 11l2 4M11 4v4M13 4h-4", "#333", "", 1.4),
    zoom: globe + p("M6 2h9v7H6z", "#222") + dot(13, 1),
    zoomx: globe + p("M6 1l9 7M14 1L6 9", "#d01c1c", "", 2),
    cube: p("M1.500 4.500l4-3h9v9.500l-4 3.500h-9z", "", "#dfe7f4") + p("M1.500 4.500h9v10h-9zM5.500 1.500h9v10h-9zM1.500 4.500l4-3M10.500 4.500l4-3M10.500 14.500l4-3M1.500 14.500l4-3", "#5b78a8", "", 1.2),
    cubes: p("M9.500 4l2-2.500h4v6l-3 2h-3z", "#6b85b0", "#dce6f5") + p("M5.500 6.500l3-3h4v6l-3 2h-4z", "#6b85b0", "#dce6f5") + p("M1.500 9.500l2-2h5v5l-2 3h-5zM1.500 9.500h5v6M6.500 9.500l2-2", "#6b85b0", "#cbd9ef"),
    vx: p("M2 15V3", "#3048d8", "", 2) + p("M2 2.500h11M11 0l4 2.500L11 5", "#1ca028", "", 1.6) + txt(6, 15, "X", 11),
    vy: p("M14 15V3", "#2c50c8", "", 2) + p("M14 2.500H3M5 0L1 2.500 5 5", "#d42020", "", 1.6) + txt(2, 15, "Y", 11),
    vz: p("M2 15V3", "#1ca028", "", 2) + p("M2 2.500h11M11 0l4 2.500L11 5", "#d42020", "", 1.6) + txt(6, 15, "Z", 11),
    vmx: p("M14 15V3", "#2c50c8", "", 2) + p("M14 2.500H3M5 0L1 2.500 5 5", "#1ca028", "", 1.6) + txt(0, 14, "-X", 10) + dot(12, 1),
    micro: p("M.5 1.500h7v6h-7z", "#333", "#ffee44") + p("M12 2l2 1-4 8-2-2z", "#111", "#333") + p("M13 7q2 3-1 6M4 14h11M4 10l4 2", "#111", "", 2),
    section: p("M1.500 5l6-3 7 2v7l-6 4-7-3zM8 7v8M1.500 5L8 7l6-3", "#999", "#eceef2") + p("M6 11l6-7", "#c01c1c", "", 2) + dot(5, 10) + dot(11, 2),
    frame2: p("M2 14L5 4l9-1 1 11", "#333", "", 1.3) + dot(4, 2) + dot(13, 1) + dot(0, 13, "#1ca028") + dot(13, 13, "#1ca028"),
    tank: p("M2 5h10q4 0 3 6H5q-4 0-3-6z", "#aaa", "#d9dade") + p("M4 8h6", "#999"),
    iwedge: p("M4 2h8M4 9h8M8 2v7", "#1a2d8c", "", 2) + wedge,
    rainbow: p("M1 6l7-4 7 4-5 8z", "#999", "#6aa0f0") + p("M3 7l6-3 5 3-4 5z", "", "#80dc78") + p("M5 8l4-1 4 1-3 4z", "", "#f4e860") + p("M7 10l3-1 1 1-1 3z", "", "#f08040"),
    rcube: p("M2 4l7-3 6 3v7l-6 4-7-3z", "#99a", "#90d0d8") + '<circle cx="7" cy="9" r="4" fill="#90dc70"/><circle cx="7" cy="9" r="2.800" fill="#f0e050"/><circle cx="7" cy="9" r="1.500" fill="#e03020"/>' + p("M2 4l6 2 7-2M8 6v9", "#789"),
    react: p("M3 3l4-2 3 2-1 3 1 2H1l2-3z", "#0c5a24", "#2c9c4a") + p("M16 4h-5M13 2l-2 2 2 2M6 16v-5M4 13l2-2 2 2", "#12862c", "", 1.5),
    blade: p("M1 10L12 2l3 1-7 7z", "#aaa", "#e4e8ee") + p("M1 14l14-3v3z", "", "#e8a8a8"),
    folders: p("M1 2h6v4H1zM9 2h6v4H9zM1 10h6v4H1zM9 10h6v4H9z", "#222", "#f4dc58"),
    icurve: p("M5 1h7M5 7h7M8.500 1v6", "#6074b8", "", 1.5) + p("M8 12q4-6 7 0", "#6074c8") + p("M0 12q4 5 8 0", "#d04060") + p("M0 12h16", "#889"),
    sheets: p("M1 1h6v14H1zM9 1h6v14H9z", "#222", "#dfe6f8") + p("M1 4h14M1 8h14M1 12h14", "#2c46b0") + p("M2 6h4M10 6h4M2 10h4M10 10h4", "#d04040"),
    legend: p("M2.500 1.500h11v13h-11z", "#222", "#fff") + p("M5.500 3v10", "#2ca030", "", 3) + p("M5.500 3v3", "#e02020", "", 3) + p("M5.500 10v3", "#2040c0", "", 3) + p("M8 4h4M8 6.500h4M8 9h4M8 11.500h4", "#333"),
    wand: star + p("M2 14L12 7l3 1-8 6z", "#333", "#ccc") + p("M8 2l5 4M13 1v4", "#c22"),
    colors: p("M1 1v14h14z", "", "#22a030") + p("M1 1v7l7 7h6z", "", "#ffe01c") + p("M1 1l13 14h-4L1 5z", "", "#e02020") + p("M1 10l5 5H1z", "", "#2040c0") + p("M8 9l6-8 2 1-6 9z", "#444", "#eee")
}

function svg(body) {
    return '<svg viewBox="0 0 16 16">' + body + '</svg>'
}

// "|" separator, "v" drop-down arrow, "+" in front: pressed, "LC" load case list
var bars = {
    toolbar1: [
        "newfile open boxtan boxblue save notes print preview | undo redo | selpoly selellipse selring selplus selwin | +list table | lcnew LC prev next eyeload xxx +eyewedge +xxwedge | glasses beadswin beads",
        "handgrid gridset +plane1 plane2 plane3 mesh wrench | move rotate mirror cross info gearbook gears",
        "dxf1 dxf2 pdf1 pdf2",
        "mon1 v mon2 v mon1 v"
    ],
    toolbar2: [
        "node v line member v poly v | nsupport lsupport ssupport | dim v comment frame | rect v opening v surf v solid solidnew v | release v nload mload mload sload soload v",
        "hand zoom zoomx cube cubes | vx vy vz vmx v micro v | section v",
        "frame2 tank | +iwedge rainbow rcube react blade folders v icurve sheets | +legend wand v colors v",
        "mon3 v mon3 v"
    ]
}

for (var id in bars) {
    var html = ""
    bars[id].forEach(function (group) {
        html += '<div class="group"><i class="grip"></i>'
        group.split(" ").forEach(function (name) {
            if (name == "|") {
                html += '<i class="sep"></i>'
            } else if (name == "v") {
                html += '<button class="drop" aria-label="More"></button>'
            } else if (name == "LC") {
                html += '<span class="combo"><select aria-label="Load case"><option>LC1</option></select></span>'
            } else {
                var on = name[0] == "+"
                if (on) name = name.slice(1)
                html += '<button class="tool' + (on ? " active" : "") + '" aria-label="' + name + '">' + svg(icons[name]) + '</button>'
            }
        })
        html += '</div>'
    })
    document.getElementById(id).innerHTML = html
}

// tree icons
var treeIcons = {
    load: svg(p("M1 15.500h14", "#444") + p("M5.500 2v5H2.500L7 12.500 11.500 7h-3V2z", "#2a4382", "#5f80cc") + p("M6.500 3v6", "#c5d5f8")),
    res: svg('<rect width="16" height="16" fill="#1822dc"/><circle cx="16" cy="16" r="17" fill="#10b8e8"/><circle cx="16" cy="16" r="13" fill="#14c83c"/><circle cx="16" cy="16" r="8" fill="#f4ec10"/><circle cx="16" cy="16" r="4" fill="#e82414"/><rect x=".5" y=".5" width="15" height="15" fill="none" stroke="#999"/>'),
    mesh: svg('<rect x="1" y="3" width="13" height="11" fill="#2458a8"/>' + p("M1 5.500h13M1 8.500h13M1 11.500h13M4.500 3v11M7.500 3v11M10.500 3v11", "#a8c4e8"))
}

// depth, state (1 checked, 0 empty, m mixed, R/r radio), icon, label, expander
var rows = [
    [2, "1", "load", "Free Line Loads"],
    [2, "1", "load", "Free Rectangular Loads"],
    [2, "1", "load", "Free Polygon Loads"],
    [2, "1", "load", "Free Circular Loads"],
    [2, "1", "load", "Free Variable Loads"],
    [2, "1", "load", "Influence Zones"],
    [2, "1", "load", "Intersections"],
    [1, "1", "load", "Other Loads", "-"],
    [2, "1", "load", "Imposed Nodal Deformations"],
    [2, "1", "load", "Imposed Line Deformations"],
    [2, "1", "load", "Imperfections"],
    [1, "1", "load", "Generated Loads", "-"],
    [2, "0", "load", "Separately"],
    [1, "1", "load", "Action Category Prestress"],
    [1, "1", "load", "Differentiate Negative Loads"],
    [0, "1", "res", "Results", "-"],
    [1, "1", "res", "Result Values", "+"],
    [1, "1", "res", "Title Info"],
    [1, "1", "res", "Max/Min Info"],
    [1, "m", "res", "Deformation", "+"],
    [1, "m", "res", "Members", "-"],
    [2, "R", "res", "Two-Colored"],
    [2, "r", "res", "With Diagram"],
    [2, "r", "res", "Without Diagram"],
    [2, "r", "res", "Cross-Sections"],
    [2, "0", "res", "Result Diagrams Filled"],
    [2, "1", "res", "Hatching"],
    [2, "0", "res", "All Values"],
    [2, "0", "res", "Extreme Values"],
    [2, "0", "res", "Display Hidden Result Diagram"],
    [2, "0", "res", "Reverse Results V-y and V-z"],
    [2, "0", "res", "Results on Couplings"],
    [2, "1", "res", "Draw in XY-Plane"],
    [2, "m", "res", "Stresses", "+"],
    [1, "m", "res", "Surfaces", "+"],
    [1, "m", "res", "Solids", "+"],
    [1, "m", "res", "Type of Display", "+"],
    [1, "1", "res", "Ribs - Effective Contribution on Su", "+"],
    [1, "1", "res", "Result Beams"],
    [1, "0", "res", "Results Within Column Area"],
    [1, "m", "res", "Support Reactions", "+"],
    [1, "0", "res", "Transparent"],
    [0, "1", "mesh", "FE Mesh", "-"],
    [1, "0", "mesh", "On Members", "+"],
    [1, "0", "mesh", "On Member Results"],
    [1, "1", "mesh", "On Surfaces", "+"],
    [1, "0", "mesh", "On Surface Results"],
    [1, "0", "mesh", "In Solids", "+"]
]

// does the branch at this depth go on below row i
function goesOn(i, depth) {
    for (var j = i + 1; j < rows.length; j++) {
        if (rows[j][0] < depth) return false
        if (rows[j][0] == depth) return true
    }
    return true
}

var tree = ""
rows.forEach(function (r, i) {
    tree += '<label class="row' + (r[3] == "Results" ? " strong" : "") + '">'
    for (var d = 0; d < r[0]; d++) {
        tree += '<span class="guide' + (goesOn(i, d) ? " line" : "") + '"></span>'
    }
    tree += '<span class="guide ' + (goesOn(i, r[0]) ? "tee" : "last") + '">'
    if (r[4]) tree += '<i class="expander' + (r[4] == "+" ? " plus" : "") + '"></i>'
    tree += '</span>'
    var radio = r[1] == "R" || r[1] == "r"
    tree += '<input type="' + (radio ? 'radio" name="members' : 'checkbox') + '"' + (r[1] == "1" || r[1] == "R" ? " checked" : "") + (r[1] == "m" ? ' class="mixed"' : "") + '>'
    tree += treeIcons[r[2]] + '<span>' + r[3] + '</span></label>'
})
document.getElementById("tree").innerHTML = tree

// factors of the panel
var factors = ""
;["Deformation", "Member diagrams", "Surface diagrams", "Section diagrams", "Reaction forces", "Trajectories"].forEach(function (name, i) {
    var on = i == 1
    var dis = on ? "" : " disabled"
    factors += '<div class="factor' + (on ? "" : " off") + '"><label for="f' + i + '">' + name + ':</label>' +
        '<div class="number"><input id="f' + i + '" type="text" value="' + (on ? "4" : "") + '"' + dis + '>' +
        '<span class="spin"><button aria-label="Up"' + dis + '></button><button aria-label="Down"' + dis + '></button></span></div></div>'
})
document.getElementById("factors").innerHTML = factors
```
